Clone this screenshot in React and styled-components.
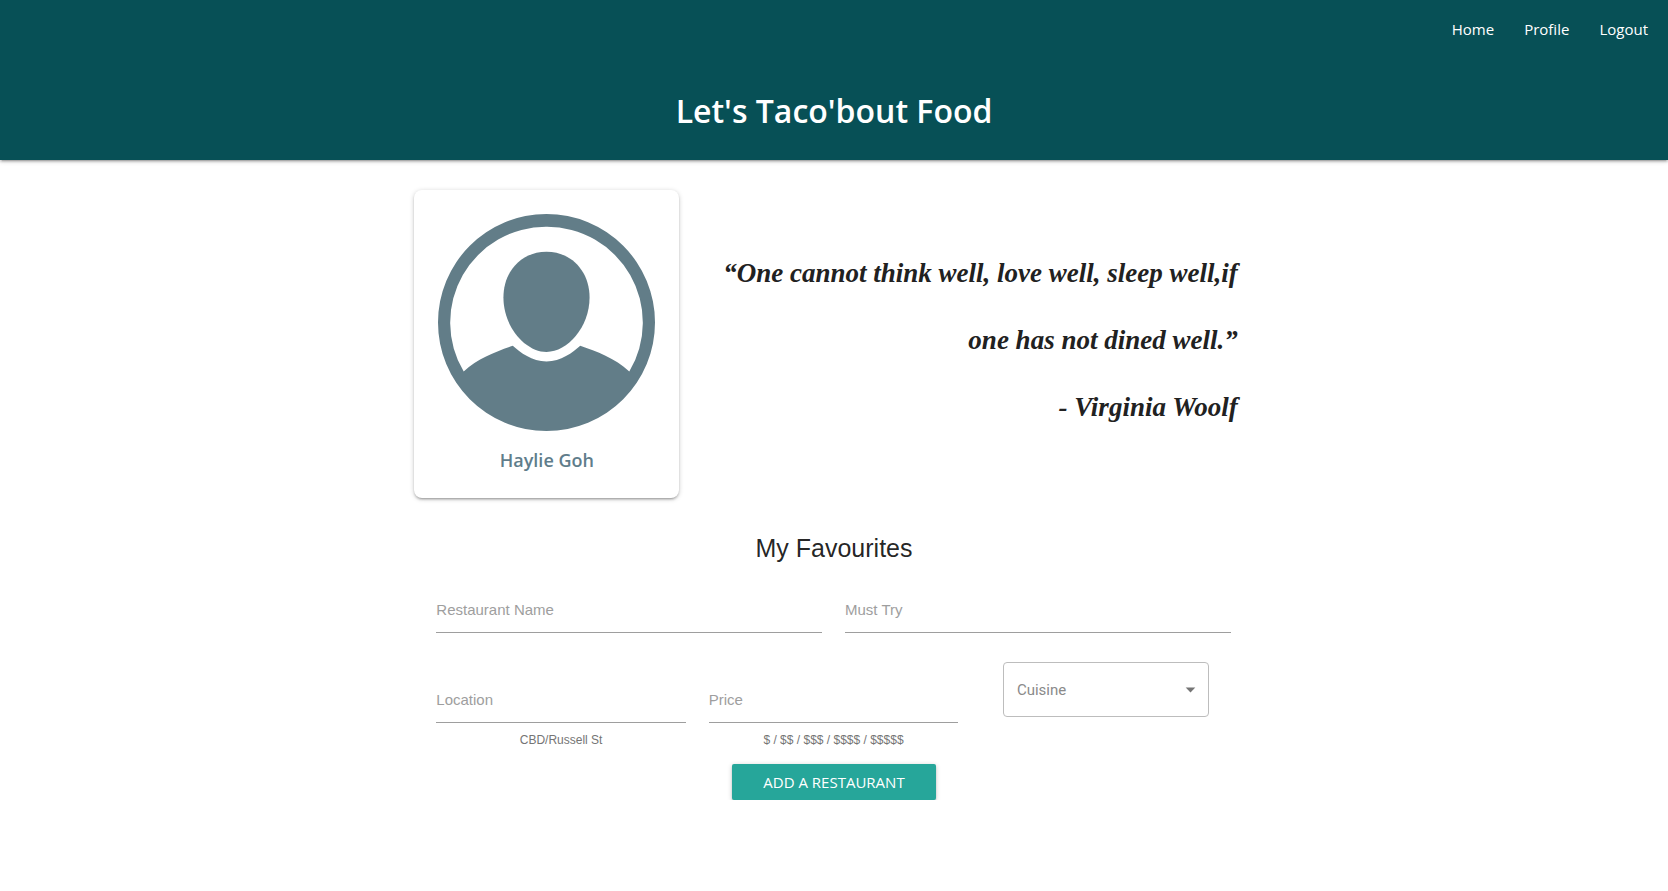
import React from "react";
import styled, { createGlobalStyle } from "styled-components";

const sans = `"Open Sans", "Liberation Sans", sans-serif`;
const arial = `"Liberation Sans", Arial, sans-serif`;
const roboto = `Roboto, "Liberation Sans", sans-serif`;
const raised = `0 2px 2px 0 rgba(0, 0, 0, 0.14), 0 3px 1px -2px rgba(0, 0, 0, 0.12), 0 1px 5px 0 rgba(0, 0, 0, 0.2)`;

const GlobalStyle = createGlobalStyle`
  *, *::before, *::after { box-sizing: border-box; }
  body { margin: 0; background: #fff; color: rgba(0, 0, 0, 0.87); font-family: ${arial}; font-size: 15px; line-height: 24px; }
`;

const Header = styled.header`
  background: #075056;
  color: #fff;
  font-family: ${sans};
  padding-bottom: 23px;
  box-shadow: ${raised};
`;

const Nav = styled.nav`
  display: flex;
  justify-content: flex-end;
  gap: 30px;
  padding: 17px 20px;
`;

const NavLink = styled.a`
  color: #fff;
  font-size: 15px;
  font-weight: 500;
  line-height: 24px;
  text-decoration: none;
`;

const SiteTitle = styled.h1`
  margin: 27px 0 0;
  font-size: 32px;
  font-weight: 600;
  line-height: 52px;
  text-align: center;
`;

const Intro = styled.section`
  display: flex;
  justify-content: space-between;
  align-items: flex-start;
  width: calc(49% + 22px);
  min-width: 822px;
  margin: 30px auto 0;
  padding-right: 16px;
`;

const ProfileCard = styled.article`
  width: 265px;
  padding: 24px 24px 26px;
  border-radius: 8px;
  background: #fff;
  box-shadow: ${raised};
`;

const Avatar = styled.svg`
  display: block;
  width: 100%;
  height: auto;
`;

const ProfileName = styled.h2`
  margin: 17px 0 0;
  color: #607d8b;
  font-family: ${sans};
  font-size: 18px;
  font-weight: 600;
  line-height: 24px;
  text-align: center;
`;

const Quote = styled.blockquote`
  margin: 50px 0 0;
  color: #212121;
  font-family: "Liberation Serif", cursive;
  font-size: 27px;
  font-style: italic;
  font-weight: 700;
  line-height: 67px;
  text-align: right;
`;

const Favourites = styled.main`
  width: 49%;
  min-width: 800px;
  margin: 35px auto 0;
`;

const SectionTitle = styled.h2`
  margin: 0;
  font-size: 25px;
  font-weight: 400;
  line-height: 30px;
  text-align: center;
`;

const FormRow = styled.div`
  display: grid;
  grid-template-columns: repeat(${(p) => p.$columns}, 1fr);
  gap: 23px;
  padding: 0 12px 0 11px;
  margin-top: ${(p) => p.$top}px;
`;

const Field = styled.div`
  padding-top: ${(p) => (p.$low ? 15 : 0)}px;
`;

const TextInput = styled.input`
  display: block;
  width: 100%;
  height: 46px;
  padding: 0;
  border: 0;
  border-bottom: 1px solid #9e9e9e;
  outline: 0;
  background: transparent;
  color: inherit;
  font: inherit;

  &::placeholder { color: #9e9e9e; opacity: 1; }
`;

const Hint = styled.small`
  display: block;
  margin-top: 8px;
  color: #757575;
  font-family: ${arial};
  font-size: 12px;
  line-height: 18px;
  text-align: center;
`;

const SelectWrap = styled.div`
  display: grid;
  align-items: center;
  justify-self: center;
  align-self: start;
  width: 206px;
`;

const Select = styled.select`
  grid-area: 1 / 1;
  width: 100%;
  height: 55px;
  padding: 0 13px;
  appearance: none;
  border: 1px solid #bdbdbd;
  border-radius: 4px;
  background: #fff;
  color: #8a8a8a;
  font-family: ${roboto};
  font-size: 15px;
`;

const Caret = styled.svg`
  grid-area: 1 / 1;
  justify-self: end;
  margin-right: 7px;
  width: 23px;
  height: 23px;
  fill: #757575;
  pointer-events: none;
`;

const Actions = styled.div`
  display: flex;
  justify-content: center;
  margin-top: 15px;
`;

const SubmitButton = styled.button`
  height: 36px;
  padding: 0 31px;
  border: 0;
  border-radius: 2px;
  background: #26a69a;
  box-shadow: ${raised};
  color: #fff;
  font-family: ${sans};
  font-size: 15px;
  font-weight: 500;
  text-transform: uppercase;
  cursor: pointer;
`;

function LabelledInput({ name, label, hint, low }) {
  return (
    <Field $low={low}>
      <TextInput
        id={name}
        name={name}
        placeholder={label}
        aria-label={label}
        aria-describedby={hint ? `${name}-hint` : undefined}
      />
      {hint && <Hint id={`${name}-hint`}>{hint}</Hint>}
    </Field>
  );
}

export default function App() {
  return (
    <>
      <GlobalStyle />
      <Header>
        <Nav>
          <NavLink href="#home">Home</NavLink>
          <NavLink href="#profile">Profile</NavLink>
          <NavLink href="#logout">Logout</NavLink>
        </Nav>
        <SiteTitle>Let's Taco'bout Food</SiteTitle>
      </Header>

      <Intro>
        <ProfileCard>
          <Avatar viewBox="0 0 650 650" fill="#627d88" aria-hidden="true">
            <path
              fillRule="evenodd"
              d="M325 0A325 325 0 1 1 325 650A325 325 0 1 1 325 0ZM325 38A287 287 0 0 0 77 472C120 432 175 412 224 395C246 415 282 442 325 442C368 442 404 415 426 395C475 412 530 432 573 472A287 287 0 0 0 325 38Z"
            />
            <path d="M325 113C250 113 196 172 196 250C196 338 262 413 325 413C388 413 454 338 454 250C454 172 400 113 325 113Z" />
          </Avatar>
          <ProfileName>Haylie Goh</ProfileName>
        </ProfileCard>
        <Quote>
          “One cannot think well, love well, sleep well,if
          <br />
          one has not dined well.”
          <br />- Virginia Woolf
        </Quote>
      </Intro>

      <Favourites>
        <SectionTitle>My Favourites</SectionTitle>
        <form onSubmit={(e) => e.preventDefault()}>
          <FormRow $columns={2} $top={24}>
            <LabelledInput name="restaurant" label="Restaurant Name" />
            <LabelledInput name="must-try" label="Must Try" />
          </FormRow>
          <FormRow $columns={3} $top={29}>
            <LabelledInput name="location" label="Location" hint="CBD/Russell St" low />
            <LabelledInput name="price" label="Price" hint="$ / $$ / $$$ / $$$$ / $$$$$" low />
            <SelectWrap>
              <Select aria-label="Cuisine" defaultValue="">
                <option value="">Cuisine</option>
              </Select>
              <Caret viewBox="0 0 24 24" aria-hidden="true">
                <path d="M7 10l5 5 5-5z" />
              </Caret>
            </SelectWrap>
          </FormRow>
          <Actions>
            <SubmitButton type="submit">Add a restaurant</SubmitButton>
          </Actions>
        </form>
      </Favourites>
    </>
  );
}
